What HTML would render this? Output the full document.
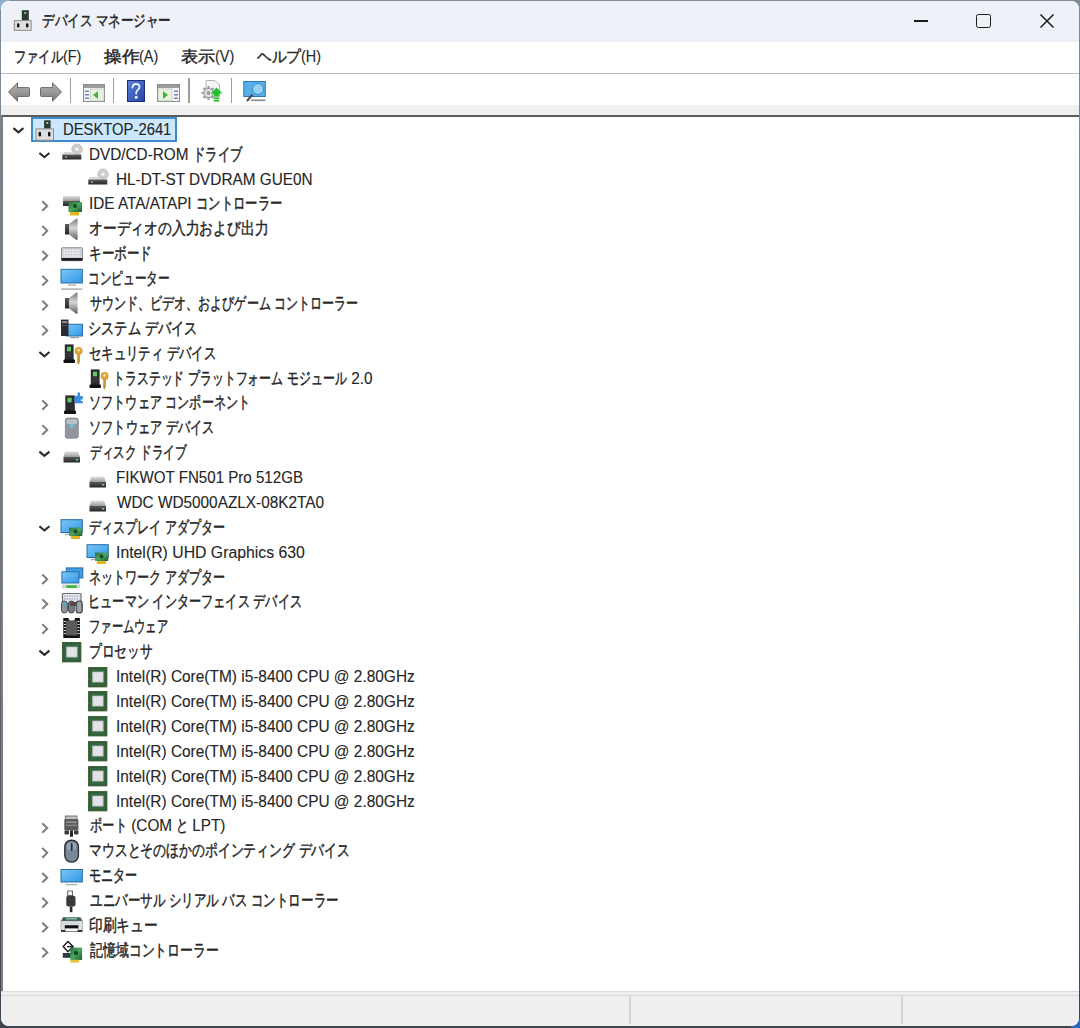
<!DOCTYPE html>
<html><head><meta charset="utf-8"><title>デバイス マネージャー</title>
<style>
html,body{margin:0;padding:0;width:1080px;height:1028px;overflow:hidden;background:linear-gradient(to bottom,#7e8b98 0%,#6c7884 50%,#3c4650 100%);}
*{box-sizing:border-box;}
body{font-family:"Liberation Sans",sans-serif;color:#1b1b1b;position:relative;}
.win{position:absolute;left:1.3px;top:1px;width:1077.4px;height:1025.3px;background:#fff;border-radius:8px;overflow:hidden;}
.title{position:absolute;left:0;top:0;width:100%;height:41px;background:#eef2f8;}
.menu{position:absolute;left:0;top:41px;width:100%;height:32px;background:#fff;border-bottom:1px solid #bcbcbc;}
.tool{position:absolute;left:0;top:73px;width:100%;height:31px;background:#fff;}
.band{position:absolute;left:0;top:104px;width:100%;height:10px;background:#f0f0f0;}
.tree{position:absolute;left:0;top:113.7px;width:100%;height:876.5px;background:#fff;border-top:2.4px solid #5c5c5c;border-left:2.5px solid #7e7e7e;}
.status{position:absolute;left:0;top:990px;width:100%;height:36px;background:#efefef;border-top:1px solid #dadada;}
.status:before{content:'';position:absolute;left:0;right:0;top:2.5px;height:1.2px;background:#d6d6d6;}
.t{position:absolute;white-space:nowrap;transform-origin:0 50%;line-height:1;-webkit-text-stroke:0.45px #262626;color:#262626;}
.ico{position:absolute;overflow:visible;}
.l{-webkit-text-stroke-width:0.12px;}
.sep{position:absolute;width:1.6px;background:#9c9c9c;}
</style></head><body>
<div style="position:absolute;right:0;bottom:0;width:9px;height:9px;background:#2d66c4"></div>
<div style="position:absolute;left:0;top:0;width:10px;height:10px;background:#8fb0cc"></div>
<div class="win">
<div class="title"></div>
<div class="menu"></div>
<div class="tool"></div>
<div class="band"></div>
<div class="tree"></div>
<div class="status"></div>
</div>

<svg width="0" height="0" style="position:absolute">
<defs>
<linearGradient id="gGrayV" x1="0" y1="0" x2="0" y2="1"><stop offset="0" stop-color="#e2e2e2"/><stop offset="1" stop-color="#9a9a9a"/></linearGradient>
<linearGradient id="gDark" x1="0" y1="0" x2="0" y2="1"><stop offset="0" stop-color="#5a5a5a"/><stop offset="1" stop-color="#262626"/></linearGradient>
<linearGradient id="gBlue" x1="0" y1="0" x2="1" y2="1"><stop offset="0" stop-color="#7cc8f6"/><stop offset="1" stop-color="#2f97e6"/></linearGradient>
<linearGradient id="gSpk" x1="0" y1="0" x2="0" y2="1"><stop offset="0" stop-color="#7a7a7a"/><stop offset="0.45" stop-color="#d6d6d6"/><stop offset="1" stop-color="#5e5e5e"/></linearGradient>
<linearGradient id="gGreen" x1="0" y1="0" x2="1" y2="1"><stop offset="0" stop-color="#2c6e3c"/><stop offset="0.5" stop-color="#4aa860"/><stop offset="1" stop-color="#1f5a2e"/></linearGradient>
<linearGradient id="gArrow" x1="0" y1="0" x2="0" y2="1"><stop offset="0" stop-color="#b4b4b4"/><stop offset="1" stop-color="#7e7e7e"/></linearGradient>
<linearGradient id="gHelp" x1="0" y1="0" x2="1" y2="1"><stop offset="0" stop-color="#5a80dc"/><stop offset="1" stop-color="#2444a4"/></linearGradient>






















</defs></svg>

<svg class="ico" style="left:0;top:0" width="40" height="40"><rect x="21.8" y="10.2" width="7" height="10.2" fill="#2a3a30"/><rect x="24.2" y="12" width="2" height="2" fill="#8fbf8f"/><rect x="14.3" y="20.6" width="16.8" height="9.8" fill="#dedede" stroke="#8c8c8c" stroke-width="1"/><rect x="17" y="23.2" width="2.4" height="4.2" rx="1.2" fill="#111"/><rect x="26" y="23.2" width="2.4" height="4.2" rx="1.2" fill="#111"/></svg>
<div class="t" style="left:42.20px;top:13.00px;font-size:16px;transform:scaleX(0.7840);">デバイス マネージャー</div>
<div style="position:absolute;left:914px;top:20px;width:14px;height:1.6px;background:#1b1b1b"></div>
<div style="position:absolute;left:976px;top:14px;width:14.5px;height:13.5px;border:1.9px solid #1b1b1b;border-radius:2.5px"></div>
<svg style="position:absolute;left:1039px;top:13px" width="16" height="16" viewBox="0 0 16 16"><path d="M1.5 1.5L14.5 14.5M14.5 1.5L1.5 14.5" stroke="#1b1b1b" stroke-width="1.5" fill="none"/></svg>
<div class="t" style="left:14.20px;top:48.50px;font-size:16px;transform:scaleX(0.7645);white-space:pre;">ファイル</div><div class="t l" style="left:63.13px;top:48.50px;font-size:16px;transform:scaleX(0.9000);white-space:pre;">(F)</div>
<div class="t" style="left:104.00px;top:48.50px;font-size:16px;transform:scaleX(1.1043);white-space:pre;">操作</div><div class="t l" style="left:139.34px;top:48.50px;font-size:16px;transform:scaleX(0.9035);white-space:pre;">(A)</div>
<div class="t" style="left:181.00px;top:48.50px;font-size:16px;transform:scaleX(1.0690);white-space:pre;">表示</div><div class="t l" style="left:215.21px;top:48.50px;font-size:16px;transform:scaleX(0.9000);white-space:pre;">(V)</div>
<div class="t" style="left:257.00px;top:48.50px;font-size:16px;transform:scaleX(0.9179);white-space:pre;">ヘルプ</div><div class="t l" style="left:301.06px;top:48.50px;font-size:16px;transform:scaleX(0.9000);white-space:pre;">(H)</div>
<svg class="ico" style="left:8px;top:82px" width="22" height="20" viewBox="0 0 22 20"><path d="M0.5 10L9.5 0.8V5.6H20.5Q21.5 5.6 21.5 6.6V13.4Q21.5 14.4 20.5 14.4H9.5V19.2z" fill="url(#gArrow)" stroke="#6a6a6a" stroke-width="1" stroke-linejoin="round"/></svg>
<svg class="ico" style="left:40px;top:82px" width="22" height="20" viewBox="0 0 22 20"><path d="M21.5 10L12.5 0.8V5.6H1.5Q0.5 5.6 0.5 6.6V13.4Q0.5 14.4 1.5 14.4H12.5V19.2z" fill="url(#gArrow)" stroke="#6a6a6a" stroke-width="1" stroke-linejoin="round"/></svg>
<svg class="ico" style="left:83px;top:84px" width="22" height="18" viewBox="0 0 22 18"><rect x="0.5" y="0.5" width="21" height="17" fill="#f4f4f8" stroke="#8c8c90"/><rect x="1" y="1" width="20" height="3" fill="#9c9ca0"/><rect x="7.5" y="5" width="13.5" height="12" fill="#e6f4de" stroke="#b0b0b4" stroke-width="0.5"/><path d="M10 11l5-4v8z" fill="#48b048"/><rect x="2" y="6.5" width="4" height="1.5" fill="#7484b4"/><rect x="2" y="10" width="4" height="1.5" fill="#7484b4"/><rect x="2" y="13.5" width="4" height="1.5" fill="#7484b4"/></svg>
<svg class="ico" style="left:127px;top:80px" width="18" height="22" viewBox="0 0 18 22"><rect x="0.5" y="0.5" width="17" height="21" fill="url(#gHelp)" stroke="#1a2e80"/><path d="M5.5 7.5Q5.5 4 9 4Q12.5 4 12.5 7Q12.5 9 10.5 10.3Q9.2 11.2 9.2 13.5" fill="none" stroke="#e4ecff" stroke-width="1.9" stroke-linecap="round"/><circle cx="9.2" cy="17.3" r="1.5" fill="#eef2ff"/></svg>
<svg class="ico" style="left:157px;top:84px" width="23" height="18" viewBox="0 0 23 18"><rect x="0.5" y="0.5" width="22" height="17" fill="#f4f4f8" stroke="#8c8c90"/><rect x="1" y="1" width="21" height="3" fill="#9c9ca0"/><rect x="1" y="5" width="14" height="12" fill="#e6f4de" stroke="#b0b0b4" stroke-width="0.5"/><path d="M6 7l5 4-5 4z" fill="#48b048"/><rect x="17" y="6.5" width="4" height="1.5" fill="#7484b4"/><rect x="17" y="10" width="4" height="1.5" fill="#7484b4"/><rect x="17" y="13.5" width="4" height="1.5" fill="#7484b4"/></svg>
<svg class="ico" style="left:200px;top:80px" width="23" height="22" viewBox="0 0 23 22"><path d="M6 0.5h9l4.5 4.5v12H6z" fill="#f6f6f6" stroke="#b4b4b4"/><g transform="translate(8.5 13)"><circle r="5.2" fill="#9c9c9c"/><path d="M0-7v3M0 4v3M-7 0h3M4 0h3M-5-5l2 2M3 3l2 2M5-5l-2 2M-3 3l-2 2" stroke="#9c9c9c" stroke-width="2.2"/><circle r="4" fill="#e4e4e4"/><circle r="2" fill="#9c9c9c"/></g><path d="M16.5 7.5l6 6h-3.3v3h-5.4v-3H10.5z" fill="#22c02a"/><rect x="13.8" y="17.6" width="5.4" height="1.6" fill="#22c02a"/><rect x="13.8" y="20" width="5.4" height="1.6" fill="#22c02a"/></svg>
<svg class="ico" style="left:243px;top:81px" width="23" height="21" viewBox="0 0 23 21"><rect x="0.8" y="0.5" width="21.5" height="15" fill="#58aee8" stroke="#2a78b8"/><circle cx="15" cy="8" r="5.5" fill="#94d2f6" stroke="#3a8ac8"/><path d="M9.5 13.5l-5.5 6.5" stroke="#4a4a4a" stroke-width="2"/><rect x="8" y="18.5" width="14.5" height="1.6" fill="#8a8a8a"/></svg>
<div class="sep" style="left:69.9px;top:78px;height:25px"></div>
<div class="sep" style="left:112.7px;top:78px;height:25px"></div>
<div class="sep" style="left:188px;top:78px;height:25px"></div>
<div class="sep" style="left:230.8px;top:78px;height:25px"></div>
<div style="position:absolute;left:629.3px;top:996px;width:1.4px;height:28px;background:#d4d4d4"></div>
<div style="position:absolute;left:901.3px;top:996px;width:1.4px;height:28px;background:#d4d4d4"></div>
<div style="position:absolute;left:31.3px;top:116.6px;width:145.5px;height:25.4px;background:#cce8ff;border:2px solid #3d8acb;"></div>
<svg class="ico" style="left:0;top:0" width="1" height="1"><path d="M13.40 128.15L18.40 132.35L23.40 128.15" stroke="#2a2a2a" stroke-width="2.1" fill="none"/></svg>
<svg class="ico" style="left:36px;top:119px" width="20" height="22" viewBox="0 0 20 22"><rect x="8.1" y="1.3" width="6.5" height="8.3" fill="#2a3a30"/><rect x="10.3" y="3" width="2" height="2" fill="#9ccf9c"/><rect x="0" y="9.9" width="17.5" height="11.3" fill="#dedede" stroke="#8c8c8c" stroke-width="1"/><rect x="2.6" y="12.8" width="2.4" height="4.6" rx="1.2" fill="#111"/><rect x="12" y="12.8" width="2.4" height="4.6" rx="1.2" fill="#111"/></svg>
<div class="t l" style="left:63.00px;top:120.75px;font-size:17px;transform:scaleX(0.8709);">DESKTOP-2641</div>
<svg class="ico" style="left:0;top:0" width="1" height="1"><path d="M39.40 153.03L44.40 157.23L49.40 153.03" stroke="#2a2a2a" stroke-width="2.1" fill="none"/></svg>
<svg class="ico" style="left:62px;top:144px" width="20" height="20" viewBox="0 0 20 20"><circle cx="15" cy="5.2" r="5.3" fill="#cdcdcd" stroke="#b0b0b0" stroke-width="0.6"/><circle cx="15" cy="5.2" r="1.6" fill="#f6f6f6"/><path d="M2 8h9l1 2.6H0.5z" fill="#d8d8d8"/><rect x="0.3" y="10.5" width="19" height="5" fill="url(#gDark)"/><rect x="3" y="12.5" width="2" height="1.2" fill="#8fcf8f"/></svg>
<div class="t l" style="left:89.00px;top:145.63px;font-size:17px;transform:scaleX(0.9000);white-space:pre;">DVD/CD-ROM </div><div class="t" style="left:192.70px;top:145.63px;font-size:17px;transform:scaleX(0.7254);white-space:pre;">ドライブ</div>
<svg class="ico" style="left:88px;top:169px" width="20" height="20" viewBox="0 0 20 20"><circle cx="15" cy="5.2" r="5.3" fill="#cdcdcd" stroke="#b0b0b0" stroke-width="0.6"/><circle cx="15" cy="5.2" r="1.6" fill="#f6f6f6"/><path d="M2 8h9l1 2.6H0.5z" fill="#d8d8d8"/><rect x="0.3" y="10.5" width="19" height="5" fill="url(#gDark)"/><rect x="3" y="12.5" width="2" height="1.2" fill="#8fcf8f"/></svg>
<div class="t l" style="left:115.78px;top:170.51px;font-size:17px;transform:scaleX(0.9023);">HL-DT-ST DVDRAM GUE0N</div>
<svg class="ico" style="left:0;top:0" width="1" height="1"><path d="M42.30 201.19L47.20 205.99L42.30 210.79" stroke="#7c7c7c" stroke-width="2" fill="none"/></svg>
<svg class="ico" style="left:62px;top:194px" width="20" height="20" viewBox="0 0 20 20"><rect x="1" y="2" width="17" height="5" fill="url(#gGrayV)"/><rect x="1" y="7" width="17" height="5" fill="url(#gDark)"/><rect x="6.5" y="8" width="13.5" height="10" fill="url(#gGreen)"/><circle cx="13" cy="12" r="2" fill="#1c4a26"/><rect x="8" y="18" width="9" height="3.5" fill="#e6b422"/></svg>
<div class="t l" style="left:89.00px;top:195.39px;font-size:17px;transform:scaleX(0.9000);white-space:pre;">IDE ATA/ATAPI </div><div class="t" style="left:195.85px;top:195.39px;font-size:17px;transform:scaleX(0.7258);white-space:pre;">コントローラー</div>
<svg class="ico" style="left:0;top:0" width="1" height="1"><path d="M42.30 226.07L47.20 230.87L42.30 235.67" stroke="#7c7c7c" stroke-width="2" fill="none"/></svg>
<svg class="ico" style="left:62px;top:219px" width="20" height="20" viewBox="0 0 20 20"><rect x="3" y="5" width="4.2" height="10.5" fill="url(#gDark)"/><path d="M7 5L14.5 -0.5Q15.6 -0.8 15.6 0.5V20Q15.6 21.4 14.5 21L7 15.5z" fill="url(#gSpk)"/></svg>
<div class="t" style="left:89.00px;top:220.27px;font-size:17px;transform:scaleX(0.8116);">オーディオの入力および出力</div>
<svg class="ico" style="left:0;top:0" width="1" height="1"><path d="M42.30 250.95L47.20 255.75L42.30 260.55" stroke="#7c7c7c" stroke-width="2" fill="none"/></svg>
<svg class="ico" style="left:62px;top:244px" width="20" height="20" viewBox="0 0 20 20"><rect x="-0.5" y="3.7" width="21" height="13" rx="1" fill="#cfd0d4" stroke="#7c7c80" stroke-width="0.8"/><path d="M1.5 6.5h17M1.5 9.3h17M1.5 12h17" stroke="#f4f4f6" stroke-width="1.6" stroke-dasharray="2 0.8"/><rect x="-0.5" y="14" width="21" height="2.8" fill="#1e1c24"/></svg>
<div class="t" style="left:89.00px;top:245.15px;font-size:17px;transform:scaleX(0.7407);">キーボード</div>
<svg class="ico" style="left:0;top:0" width="1" height="1"><path d="M42.30 275.83L47.20 280.63L42.30 285.43" stroke="#7c7c7c" stroke-width="2" fill="none"/></svg>
<svg class="ico" style="left:62px;top:269px" width="20" height="20" viewBox="0 0 20 20"><rect x="-1" y="0.3" width="21.3" height="13.7" fill="url(#gBlue)" stroke="#2a6aa6" stroke-width="1"/><rect x="6" y="15.6" width="8" height="1" fill="#9a9a9a"/><rect x="-1" y="19.3" width="21.3" height="1.6" fill="#b4b4b4"/></svg>
<div class="t" style="left:88.20px;top:270.03px;font-size:17px;transform:scaleX(0.6870);">コンピューター</div>
<svg class="ico" style="left:0;top:0" width="1" height="1"><path d="M42.30 300.71L47.20 305.51L42.30 310.31" stroke="#7c7c7c" stroke-width="2" fill="none"/></svg>
<svg class="ico" style="left:62px;top:293px" width="20" height="20" viewBox="0 0 20 20"><rect x="3" y="5" width="4.2" height="10.5" fill="url(#gDark)"/><path d="M7 5L14.5 -0.5Q15.6 -0.8 15.6 0.5V20Q15.6 21.4 14.5 21L7 15.5z" fill="url(#gSpk)"/></svg>
<div class="t" style="left:89.80px;top:294.91px;font-size:17px;transform:scaleX(0.7082);">サウンド、ビデオ、およびゲーム コントローラー</div>
<svg class="ico" style="left:0;top:0" width="1" height="1"><path d="M42.30 325.59L47.20 330.39L42.30 335.19" stroke="#7c7c7c" stroke-width="2" fill="none"/></svg>
<svg class="ico" style="left:62px;top:318px" width="20" height="20" viewBox="0 0 20 20"><rect x="4.6" y="6.3" width="15.9" height="11.7" fill="url(#gBlue)" stroke="#2a6aa6" stroke-width="1"/><rect x="-1" y="1.6" width="7.5" height="16.4" fill="#2a2c30"/><rect x="0" y="3" width="5.5" height="2.2" fill="#8a8a8a"/><rect x="0" y="7" width="5.5" height="1" fill="#555"/><rect x="8" y="19" width="9" height="1.2" fill="#a0a0a0"/></svg>
<div class="t" style="left:88.20px;top:319.79px;font-size:17px;transform:scaleX(0.7794);">システム デバイス</div>
<svg class="ico" style="left:0;top:0" width="1" height="1"><path d="M39.40 352.07L44.40 356.27L49.40 352.07" stroke="#2a2a2a" stroke-width="2.1" fill="none"/></svg>
<svg class="ico" style="left:62px;top:343px" width="20" height="20" viewBox="0 0 20 20"><rect x="2.8" y="1.4" width="8.8" height="16" fill="#2c2c34"/><rect x="1.5" y="16.5" width="11.5" height="3.5" rx="1" fill="#111"/><rect x="5" y="3.8" width="4" height="4.5" fill="#5fcf5f"/><rect x="4" y="10" width="6.5" height="0.7" fill="#45454d"/><rect x="4" y="12.5" width="6.5" height="0.7" fill="#45454d"/><circle cx="16.6" cy="8" r="4" fill="#d9a63e"/><circle cx="16.6" cy="7.3" r="1.3" fill="#f6e2b0"/><path d="M15.2 11h2.8v7.5l-1.4 3.3-1.4-1.8z" fill="#cf9a30"/></svg>
<div class="t" style="left:89.00px;top:344.67px;font-size:17px;transform:scaleX(0.7267);">セキュリティ デバイス</div>
<svg class="ico" style="left:88px;top:368px" width="20" height="20" viewBox="0 0 20 20"><rect x="2.8" y="1.4" width="8.8" height="16" fill="#2c2c34"/><rect x="1.5" y="16.5" width="11.5" height="3.5" rx="1" fill="#111"/><rect x="5" y="3.8" width="4" height="4.5" fill="#5fcf5f"/><rect x="4" y="10" width="6.5" height="0.7" fill="#45454d"/><rect x="4" y="12.5" width="6.5" height="0.7" fill="#45454d"/><circle cx="16.6" cy="8" r="4" fill="#d9a63e"/><circle cx="16.6" cy="7.3" r="1.3" fill="#f6e2b0"/><path d="M15.2 11h2.8v7.5l-1.4 3.3-1.4-1.8z" fill="#cf9a30"/></svg>
<div class="t" style="left:112.58px;top:369.55px;font-size:17px;transform:scaleX(0.6990);white-space:pre;">トラステッド</div><div class="t l" style="left:183.88px;top:369.55px;font-size:17px;transform:scaleX(0.9000);white-space:pre;"> </div><div class="t" style="left:188.14px;top:369.55px;font-size:17px;transform:scaleX(0.6990);white-space:pre;">プラットフォーム</div><div class="t l" style="left:283.21px;top:369.55px;font-size:17px;transform:scaleX(0.9000);white-space:pre;"> </div><div class="t" style="left:287.47px;top:369.55px;font-size:17px;transform:scaleX(0.6990);white-space:pre;">モジュール</div><div class="t l" style="left:346.88px;top:369.55px;font-size:17px;transform:scaleX(0.9000);white-space:pre;"> 2.0</div>
<svg class="ico" style="left:0;top:0" width="1" height="1"><path d="M42.30 400.23L47.20 405.03L42.30 409.83" stroke="#7c7c7c" stroke-width="2" fill="none"/></svg>
<svg class="ico" style="left:62px;top:393px" width="20" height="20" viewBox="0 0 20 20"><rect x="3.3" y="2.4" width="9.5" height="16" fill="#2c2c34"/><rect x="2" y="17.5" width="12" height="3.5" rx="1" fill="#111"/><rect x="5.5" y="4.8" width="4.2" height="4.5" fill="#5fcf5f"/><path d="M12.5 3h3V-0.5h2.5V3h2.8v3.5h-2v1.5h2v2.2h-8.3z" fill="#3b8ee0"/></svg>
<div class="t" style="left:89.00px;top:394.43px;font-size:17px;transform:scaleX(0.7138);">ソフトウェア コンポーネント</div>
<svg class="ico" style="left:0;top:0" width="1" height="1"><path d="M42.30 425.11L47.20 429.91L42.30 434.71" stroke="#7c7c7c" stroke-width="2" fill="none"/></svg>
<svg class="ico" style="left:62px;top:418px" width="20" height="20" viewBox="0 0 20 20"><rect x="3.3" y="0" width="13.1" height="20.2" rx="2" fill="#8f969e" stroke="#6e767e" stroke-width="0.6"/><rect x="4.5" y="1.2" width="10.7" height="5" rx="1.5" fill="#b8c0c8"/><circle cx="9.7" cy="8" r="1.8" fill="#64d0d8"/></svg>
<div class="t" style="left:89.00px;top:419.31px;font-size:17px;transform:scaleX(0.7193);">ソフトウェア デバイス</div>
<svg class="ico" style="left:0;top:0" width="1" height="1"><path d="M39.40 451.59L44.40 455.79L49.40 451.59" stroke="#2a2a2a" stroke-width="2.1" fill="none"/></svg>
<svg class="ico" style="left:62px;top:443px" width="20" height="20" viewBox="0 0 20 20"><path d="M3 8.6h13l2 5.4H1.5z" fill="url(#gGrayV)"/><rect x="1.5" y="14" width="16.5" height="5.5" fill="url(#gDark)"/><rect x="14" y="16" width="2.2" height="1.5" fill="#6fd06f"/></svg>
<div class="t" style="left:89.80px;top:444.19px;font-size:17px;transform:scaleX(0.6858);">ディスク ドライブ</div>
<svg class="ico" style="left:88px;top:468px" width="20" height="20" viewBox="0 0 20 20"><path d="M3 8.6h13l2 5.4H1.5z" fill="url(#gGrayV)"/><rect x="1.5" y="14" width="16.5" height="5.5" fill="url(#gDark)"/><rect x="14" y="16" width="2.2" height="1.5" fill="#6fd06f"/></svg>
<div class="t l" style="left:115.78px;top:469.07px;font-size:17px;transform:scaleX(0.8890);">FIKWOT FN501 Pro 512GB</div>
<svg class="ico" style="left:88px;top:492px" width="20" height="20" viewBox="0 0 20 20"><path d="M3 8.6h13l2 5.4H1.5z" fill="url(#gGrayV)"/><rect x="1.5" y="14" width="16.5" height="5.5" fill="url(#gDark)"/><rect x="14" y="16" width="2.2" height="1.5" fill="#6fd06f"/></svg>
<div class="t l" style="left:116.58px;top:493.95px;font-size:17px;transform:scaleX(0.9031);">WDC WD5000AZLX-08K2TA0</div>
<svg class="ico" style="left:0;top:0" width="1" height="1"><path d="M39.40 526.23L44.40 530.43L49.40 526.23" stroke="#2a2a2a" stroke-width="2.1" fill="none"/></svg>
<svg class="ico" style="left:62px;top:517px" width="20" height="20" viewBox="0 0 20 20"><rect x="-1" y="2.7" width="21.3" height="12.8" fill="url(#gBlue)" stroke="#2a6aa6" stroke-width="1"/><rect x="7" y="10.6" width="13.3" height="8.4" fill="url(#gGreen)"/><circle cx="13.5" cy="14.5" r="2" fill="#1c4a26"/><rect x="8.8" y="19" width="9.2" height="3" fill="#e6b422"/><path d="M3 18l4-1" stroke="#777" stroke-width="0.8"/></svg>
<div class="t" style="left:89.00px;top:518.83px;font-size:17px;transform:scaleX(0.7106);">ディスプレイ アダプター</div>
<svg class="ico" style="left:88px;top:542px" width="20" height="20" viewBox="0 0 20 20"><rect x="-1" y="2.7" width="21.3" height="12.8" fill="url(#gBlue)" stroke="#2a6aa6" stroke-width="1"/><rect x="7" y="10.6" width="13.3" height="8.4" fill="url(#gGreen)"/><circle cx="13.5" cy="14.5" r="2" fill="#1c4a26"/><rect x="8.8" y="19" width="9.2" height="3" fill="#e6b422"/><path d="M3 18l4-1" stroke="#777" stroke-width="0.8"/></svg>
<div class="t l" style="left:115.78px;top:543.71px;font-size:17px;transform:scaleX(0.9299);">Intel(R) UHD Graphics 630</div>
<svg class="ico" style="left:0;top:0" width="1" height="1"><path d="M42.30 574.39L47.20 579.19L42.30 583.99" stroke="#7c7c7c" stroke-width="2" fill="none"/></svg>
<svg class="ico" style="left:62px;top:567px" width="20" height="20" viewBox="0 0 20 20"><rect x="4.3" y="0.9" width="16.5" height="10.1" fill="#3d9fe6" stroke="#2a6aa6" stroke-width="1"/><rect x="-0.1" y="4.8" width="17" height="11.2" fill="url(#gBlue)" stroke="#2a6aa6" stroke-width="1"/><rect x="0" y="17.5" width="18" height="3.8" fill="#d4d4d4"/><rect x="4" y="18.3" width="11" height="2.6" rx="1.3" fill="#3cb83c"/></svg>
<div class="t" style="left:89.00px;top:568.59px;font-size:17px;transform:scaleX(0.7106);">ネットワーク アダプター</div>
<svg class="ico" style="left:0;top:0" width="1" height="1"><path d="M42.30 599.27L47.20 604.07L42.30 608.87" stroke="#7c7c7c" stroke-width="2" fill="none"/></svg>
<svg class="ico" style="left:62px;top:592px" width="20" height="20" viewBox="0 0 20 20"><rect x="0.5" y="1.5" width="18.5" height="10" rx="0.8" fill="#e8e8ee" stroke="#707074" stroke-width="1.2"/><path d="M2 4.2h15.5M2 6.8h15.5" stroke="#9aa8c0" stroke-width="1.2" stroke-dasharray="1.6 0.9"/><rect x="-0.5" y="9" width="5.8" height="12" rx="2.8" fill="#8a949c" stroke="#4a4a50" stroke-width="1"/><rect x="0.8" y="10" width="3.5" height="5" fill="#5aa8b8"/><rect x="6.5" y="9" width="5.8" height="12" rx="2.8" fill="#7a7a80" stroke="#4a4a50" stroke-width="1"/><rect x="14.2" y="9" width="6" height="12" rx="2.8" fill="#9aa4ae" stroke="#3c3c42" stroke-width="1.2"/><rect x="8" y="10" width="6" height="4" fill="#5a4a44"/></svg>
<div class="t" style="left:88.20px;top:593.47px;font-size:17px;transform:scaleX(0.7171);">ヒューマン インターフェイス デバイス</div>
<svg class="ico" style="left:0;top:0" width="1" height="1"><path d="M42.30 624.15L47.20 628.95L42.30 633.75" stroke="#7c7c7c" stroke-width="2" fill="none"/></svg>
<svg class="ico" style="left:62px;top:617px" width="20" height="20" viewBox="0 0 20 20"><path d="M1.3 1h5.2a3.3 3 0 0 0 6.6 0h4.8v20h-16.6z" fill="#111"/><rect x="3.8" y="3.5" width="11.6" height="15" fill="#5a5a5a"/><path d="M1.8 4.5h2M1.8 7.5h2M1.8 10.5h2M1.8 13.5h2M1.8 16.5h2M15.5 4.5h2M15.5 7.5h2M15.5 10.5h2M15.5 13.5h2M15.5 16.5h2" stroke="#e8e8e8" stroke-width="1"/></svg>
<div class="t" style="left:89.00px;top:618.35px;font-size:17px;transform:scaleX(0.6640);">ファームウェア</div>
<svg class="ico" style="left:0;top:0" width="1" height="1"><path d="M39.40 650.63L44.40 654.83L49.40 650.63" stroke="#2a2a2a" stroke-width="2.1" fill="none"/></svg>
<svg class="ico" style="left:62px;top:642px" width="20" height="20" viewBox="0 0 20 20"><rect x="0" y="0" width="19.3" height="20.3" fill="#2a5534"/><rect x="0.3" y="0.3" width="18.7" height="19.7" fill="none" stroke="#a8a060" stroke-width="0.6" stroke-dasharray="0.8 0.8"/><rect x="1.6" y="1.6" width="16.1" height="17.1" fill="#34663f"/><rect x="4.3" y="4.7" width="11.2" height="10.7" fill="#d2d2d6"/><rect x="5.5" y="5.9" width="8.8" height="8.3" fill="#e4e4e8"/></svg>
<div class="t" style="left:89.00px;top:643.23px;font-size:17px;transform:scaleX(0.7454);">プロセッサ</div>
<svg class="ico" style="left:88px;top:667px" width="20" height="20" viewBox="0 0 20 20"><rect x="0" y="0" width="19.3" height="20.3" fill="#2a5534"/><rect x="0.3" y="0.3" width="18.7" height="19.7" fill="none" stroke="#a8a060" stroke-width="0.6" stroke-dasharray="0.8 0.8"/><rect x="1.6" y="1.6" width="16.1" height="17.1" fill="#34663f"/><rect x="4.3" y="4.7" width="11.2" height="10.7" fill="#d2d2d6"/><rect x="5.5" y="5.9" width="8.8" height="8.3" fill="#e4e4e8"/></svg>
<div class="t l" style="left:115.78px;top:668.11px;font-size:17px;transform:scaleX(0.9080);">Intel(R) Core(TM) i5-8400 CPU @ 2.80GHz</div>
<svg class="ico" style="left:88px;top:691px" width="20" height="20" viewBox="0 0 20 20"><rect x="0" y="0" width="19.3" height="20.3" fill="#2a5534"/><rect x="0.3" y="0.3" width="18.7" height="19.7" fill="none" stroke="#a8a060" stroke-width="0.6" stroke-dasharray="0.8 0.8"/><rect x="1.6" y="1.6" width="16.1" height="17.1" fill="#34663f"/><rect x="4.3" y="4.7" width="11.2" height="10.7" fill="#d2d2d6"/><rect x="5.5" y="5.9" width="8.8" height="8.3" fill="#e4e4e8"/></svg>
<div class="t l" style="left:115.78px;top:692.99px;font-size:17px;transform:scaleX(0.9080);">Intel(R) Core(TM) i5-8400 CPU @ 2.80GHz</div>
<svg class="ico" style="left:88px;top:716px" width="20" height="20" viewBox="0 0 20 20"><rect x="0" y="0" width="19.3" height="20.3" fill="#2a5534"/><rect x="0.3" y="0.3" width="18.7" height="19.7" fill="none" stroke="#a8a060" stroke-width="0.6" stroke-dasharray="0.8 0.8"/><rect x="1.6" y="1.6" width="16.1" height="17.1" fill="#34663f"/><rect x="4.3" y="4.7" width="11.2" height="10.7" fill="#d2d2d6"/><rect x="5.5" y="5.9" width="8.8" height="8.3" fill="#e4e4e8"/></svg>
<div class="t l" style="left:115.78px;top:717.87px;font-size:17px;transform:scaleX(0.9080);">Intel(R) Core(TM) i5-8400 CPU @ 2.80GHz</div>
<svg class="ico" style="left:88px;top:741px" width="20" height="20" viewBox="0 0 20 20"><rect x="0" y="0" width="19.3" height="20.3" fill="#2a5534"/><rect x="0.3" y="0.3" width="18.7" height="19.7" fill="none" stroke="#a8a060" stroke-width="0.6" stroke-dasharray="0.8 0.8"/><rect x="1.6" y="1.6" width="16.1" height="17.1" fill="#34663f"/><rect x="4.3" y="4.7" width="11.2" height="10.7" fill="#d2d2d6"/><rect x="5.5" y="5.9" width="8.8" height="8.3" fill="#e4e4e8"/></svg>
<div class="t l" style="left:115.78px;top:742.75px;font-size:17px;transform:scaleX(0.9080);">Intel(R) Core(TM) i5-8400 CPU @ 2.80GHz</div>
<svg class="ico" style="left:88px;top:766px" width="20" height="20" viewBox="0 0 20 20"><rect x="0" y="0" width="19.3" height="20.3" fill="#2a5534"/><rect x="0.3" y="0.3" width="18.7" height="19.7" fill="none" stroke="#a8a060" stroke-width="0.6" stroke-dasharray="0.8 0.8"/><rect x="1.6" y="1.6" width="16.1" height="17.1" fill="#34663f"/><rect x="4.3" y="4.7" width="11.2" height="10.7" fill="#d2d2d6"/><rect x="5.5" y="5.9" width="8.8" height="8.3" fill="#e4e4e8"/></svg>
<div class="t l" style="left:115.78px;top:767.63px;font-size:17px;transform:scaleX(0.9080);">Intel(R) Core(TM) i5-8400 CPU @ 2.80GHz</div>
<svg class="ico" style="left:88px;top:791px" width="20" height="20" viewBox="0 0 20 20"><rect x="0" y="0" width="19.3" height="20.3" fill="#2a5534"/><rect x="0.3" y="0.3" width="18.7" height="19.7" fill="none" stroke="#a8a060" stroke-width="0.6" stroke-dasharray="0.8 0.8"/><rect x="1.6" y="1.6" width="16.1" height="17.1" fill="#34663f"/><rect x="4.3" y="4.7" width="11.2" height="10.7" fill="#d2d2d6"/><rect x="5.5" y="5.9" width="8.8" height="8.3" fill="#e4e4e8"/></svg>
<div class="t l" style="left:115.78px;top:792.51px;font-size:17px;transform:scaleX(0.9080);">Intel(R) Core(TM) i5-8400 CPU @ 2.80GHz</div>
<svg class="ico" style="left:0;top:0" width="1" height="1"><path d="M42.30 823.19L47.20 827.99L42.30 832.79" stroke="#7c7c7c" stroke-width="2" fill="none"/></svg>
<svg class="ico" style="left:62px;top:816px" width="20" height="20" viewBox="0 0 20 20"><rect x="3.3" y="0" width="11.7" height="3.6" fill="#f0f0f0" stroke="#555" stroke-width="0.8"/><path d="M5 0.2v3M7 0.2v3M9 0.2v3M11 0.2v3M13 0.2v3" stroke="#555" stroke-width="0.6"/><rect x="2.3" y="3.3" width="14.1" height="11.2" rx="1" fill="#5a5a5a"/><rect x="4" y="5.5" width="10.7" height="1.4" fill="#9a9a9a"/><rect x="4" y="8.7" width="10.7" height="1.4" fill="#8a8a8a"/><rect x="2.5" y="14.5" width="4.5" height="3.9" rx="1" fill="#3a3a3a"/><rect x="12" y="14.5" width="4.5" height="3.9" rx="1" fill="#3a3a3a"/><rect x="8" y="14.5" width="3" height="6.3" fill="#2a2a2a"/></svg>
<div class="t" style="left:89.80px;top:817.39px;font-size:17px;transform:scaleX(0.7241);white-space:pre;">ポート</div><div class="t l" style="left:126.73px;top:817.39px;font-size:17px;transform:scaleX(0.9000);white-space:pre;"> (COM </div><div class="t" style="left:176.03px;top:817.39px;font-size:17px;transform:scaleX(0.7241);white-space:pre;">と</div><div class="t l" style="left:188.34px;top:817.39px;font-size:17px;transform:scaleX(0.9000);white-space:pre;"> LPT)</div>
<svg class="ico" style="left:0;top:0" width="1" height="1"><path d="M42.30 848.07L47.20 852.87L42.30 857.67" stroke="#7c7c7c" stroke-width="2" fill="none"/></svg>
<svg class="ico" style="left:62px;top:841px" width="20" height="20" viewBox="0 0 20 20"><rect x="2.8" y="-0.8" width="13.6" height="21.9" rx="6.5" fill="#7a8898" stroke="#2a2e34" stroke-width="1.4"/><rect x="5" y="1.5" width="9" height="8" rx="4" fill="#9aa8b6"/><rect x="8.8" y="2" width="1.8" height="8" rx="0.9" fill="#1c2a3a"/></svg>
<div class="t" style="left:89.00px;top:842.27px;font-size:17px;transform:scaleX(0.7573);">マウスとそのほかのポインティング デバイス</div>
<svg class="ico" style="left:0;top:0" width="1" height="1"><path d="M42.30 872.95L47.20 877.75L42.30 882.55" stroke="#7c7c7c" stroke-width="2" fill="none"/></svg>
<svg class="ico" style="left:62px;top:866px" width="20" height="20" viewBox="0 0 20 20"><rect x="-1" y="3.5" width="21.3" height="12.5" fill="url(#gBlue)" stroke="#2a6aa6" stroke-width="1"/><rect x="4" y="18" width="11" height="1.2" fill="#a8a8a8"/></svg>
<div class="t" style="left:89.00px;top:867.15px;font-size:17px;transform:scaleX(0.7137);">モニター</div>
<svg class="ico" style="left:0;top:0" width="1" height="1"><path d="M42.30 897.83L47.20 902.63L42.30 907.43" stroke="#7c7c7c" stroke-width="2" fill="none"/></svg>
<svg class="ico" style="left:62px;top:891px" width="20" height="20" viewBox="0 0 20 20"><rect x="5.7" y="0" width="4.9" height="4.7" fill="#f4f4f4" stroke="#444" stroke-width="0.8"/><rect x="4.3" y="4.7" width="9.2" height="10.7" rx="2" fill="#3a3a3a"/><rect x="7.8" y="15.4" width="2.6" height="5.8" fill="#2a2a2a"/></svg>
<div class="t" style="left:89.80px;top:892.03px;font-size:17px;transform:scaleX(0.7373);">ユニバーサル シリアル バス コントローラー</div>
<svg class="ico" style="left:0;top:0" width="1" height="1"><path d="M42.30 922.71L47.20 927.51L42.30 932.31" stroke="#7c7c7c" stroke-width="2" fill="none"/></svg>
<svg class="ico" style="left:62px;top:915px" width="20" height="20" viewBox="0 0 20 20"><path d="M1 2.3h17.5l2 3.7H-1z" fill="#3e5e56"/><rect x="4" y="3" width="11" height="1.5" fill="#7ac0a0"/><rect x="-1" y="6" width="21.5" height="9" fill="#e4e8ea" stroke="#8a8e90" stroke-width="0.6"/><path d="M0 8.5h19M0 11h19" stroke="#b8bcbe" stroke-width="0.6"/><rect x="2.8" y="10.2" width="13.6" height="3.4" fill="#141414"/><rect x="-1" y="15" width="21.5" height="2" fill="#3a3a3a"/><rect x="3.5" y="13.6" width="12" height="2.8" fill="#fafafa"/></svg>
<div class="t" style="left:89.00px;top:916.91px;font-size:17px;transform:scaleX(0.8072);">印刷キュー</div>
<svg class="ico" style="left:0;top:0" width="1" height="1"><path d="M42.30 947.59L47.20 952.39L42.30 957.19" stroke="#7c7c7c" stroke-width="2" fill="none"/></svg>
<svg class="ico" style="left:62px;top:940px" width="20" height="20" viewBox="0 0 20 20"><path d="M6 1.5L11 6.6L6 11.7L1.2 6.6z" fill="none" stroke="#1a1a1a" stroke-width="1.4"/><path d="M5 6.6h6.5" stroke="#1a1a1a" stroke-width="1.4"/><rect x="0.8" y="13" width="8.8" height="4.8" fill="#2c3a44"/><rect x="8.2" y="7.6" width="11.9" height="12.3" fill="url(#gGreen)"/><circle cx="14" cy="13" r="2.2" fill="#1c4a26"/><rect x="8.2" y="19.9" width="8.8" height="2.7" fill="#e6c840"/></svg>
<div class="t" style="left:89.80px;top:941.79px;font-size:17px;transform:scaleX(0.7574);">記憶域コントローラー</div>
</body></html>
